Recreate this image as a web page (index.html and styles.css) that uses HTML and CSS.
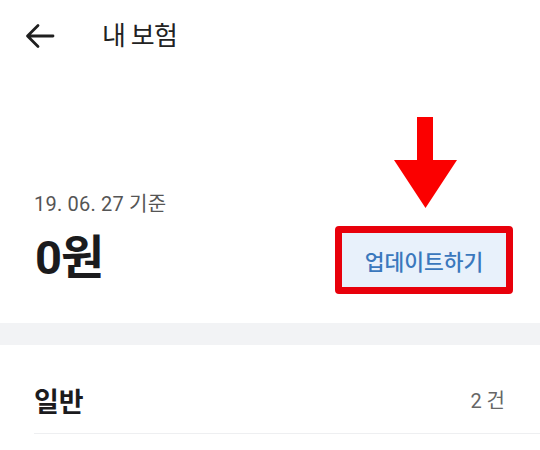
FILE: index.html
```html
<!DOCTYPE html>
<html lang="ko">
<head>
<meta charset="utf-8">
<link rel="stylesheet" href="styles.css">
</head>
<body>
<div class="page">
  <header class="topbar">
    <svg class="back" width="30" height="26" viewBox="0 0 30 26" aria-hidden="true">
      <path d="M28 13 H3 M13 2.5 L2.5 13 L13 23.5" fill="none" stroke="#1f1f1f" stroke-width="2.8" stroke-linecap="round" stroke-linejoin="round"/>
    </svg>
    <h1 class="title">내 보험</h1>
  </header>

  <section class="summary">
    <div class="total">
      <div class="date">19. 06. 27 기준</div>
      <div class="amount">0원</div>
    </div>
    <div class="action">
      <svg class="pointer" width="64" height="91" viewBox="0 0 64 91" aria-hidden="true">
        <polygon points="23,0 39,0 39,43 63,43 31.5,91 0,43 23,43" fill="#fb0000"/>
      </svg>
      <button class="update">업데이트하기</button>
    </div>
  </section>

  <div class="band"></div>

  <div class="row">
    <span class="row-title">일반</span>
    <span class="row-count">2 건</span>
  </div>
</div>
</body>
</html>
```
FILE: styles.css
```css
* { box-sizing: border-box; }
html, body { margin: 0; padding: 0; background: #ffffff; }
body {
  font-family: "Roboto", "Noto Sans CJK KR", sans-serif;
  color: #1d1d1f;
}
.page { width: 540px; }

.topbar {
  height: 72px;
  display: flex;
  align-items: center;
  padding-left: 25px;
}
.back { display: block; }
.title {
  margin: 0 0 0 47px;
  font-size: 26px;
  font-weight: 400;
  color: #222;
  line-height: 32px;
  letter-spacing: -0.8px;
}

.summary {
  display: flex;
  justify-content: space-between;
  align-items: flex-end;
  padding: 45px 27px 29px 34px;
}
.total { padding-bottom: 12px; }
.date {
  font-size: 20px;
  line-height: 24px;
  color: #555;
  letter-spacing: 0.2px;
}
.amount {
  margin-top: 18px;
  margin-left: 1px;
  font-size: 47px;
  line-height: 48px;
  font-weight: 700;
  color: #1b1b1d;
  letter-spacing: -1px;
}
.action {
  display: flex;
  flex-direction: column;
  align-items: center;
  gap: 18px;
}
.pointer { display: block; margin-left: 3px; }
.update {
  width: 178px;
  height: 68px;
  border: 7px solid #e8000b;
  border-radius: 4px;
  background: #e8f1fb;
  color: #3a78bd;
  font-family: "Noto Sans CJK KR", sans-serif;
  font-size: 21.5px;
  font-weight: 500;
  padding: 0;
}

.band { height: 22px; background: #f2f3f5; }

.row {
  display: flex;
  justify-content: space-between;
  align-items: center;
  margin-left: 34px;
  padding: 36px 35px 12px 0;
  border-bottom: 1px solid #eeeff1;
}
.row-title {
  font-family: "Noto Sans CJK KR", sans-serif;
  font-size: 27px;
  line-height: 40px;
  font-weight: 700;
  color: #1b1b1d;
}
.row-count {
  font-size: 20px;
  line-height: 40px;
  color: #666;
}
```
